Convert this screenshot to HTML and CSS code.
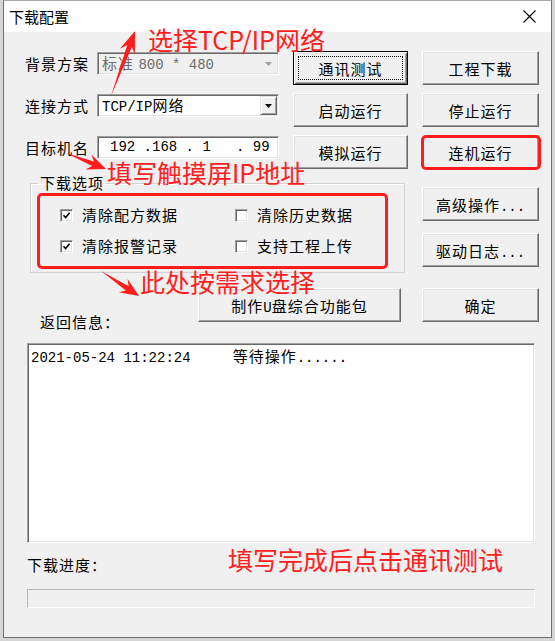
FILE: index.html
```html
<!DOCTYPE html>
<html lang="zh-CN">

<head>
    <meta charset="UTF-8">
    <title>下载配置</title>
    <link rel="stylesheet" href="styles.css">
</head>

<body>
    <div class="window">
        <div class="titlebar">
            <span class="title">下载配置</span>
            <span class="close">
                <svg width="13" height="13" viewBox="0 0 13 13">
                    <path d="M0.5 0.5 L12.5 12.5 M12.5 0.5 L0.5 12.5" stroke="#000" stroke-width="1.1" fill="none" />
                </svg>
            </span>
        </div>

        <div class="content">
            <div class="top-grid">
                <span class="field-label">背景方案</span>
                <div class="field combo disabled">
                    <span class="field-text">标准 <span class="mono">800 * 480</span></span>
                    <span class="drop">
                        <svg width="7" height="4" viewBox="0 0 7 4"><polygon points="0,0 7,0 3.5,4" fill="#a0a0a0" /></svg>
                    </span>
                </div>
                <button class="btn focused">通讯测试</button>
                <button class="btn">工程下载</button>

                <span class="field-label">连接方式</span>
                <div class="field combo">
                    <span class="field-text"><span class="mono">TCP/IP</span>网络</span>
                    <span class="drop raised">
                        <svg width="7" height="4" viewBox="0 0 7 4"><polygon points="0,0 7,0 3.5,4" fill="#000" /></svg>
                    </span>
                </div>
                <button class="btn">启动运行</button>
                <button class="btn">停止运行</button>

                <span class="field-label">目标机名</span>
                <div class="field ip">
                    <span class="mono ip-text">192 .168 . 1   . 99</span>
                </div>
                <button class="btn">模拟运行</button>
                <button class="btn flagged">连机运行</button>

                <fieldset class="options">
                    <legend>下载选项</legend>
                    <div class="marked-group">
                        <label class="check"><span class="box"><svg width="9" height="9" viewBox="0 0 9 9"><path d="M1.5 4.2 L3.6 6.5 L7.6 1.8" stroke="#000" stroke-width="1.6" fill="none" /></svg></span>清除配方数据</label>
                        <label class="check"><span class="box"></span>清除历史数据</label>
                        <label class="check"><span class="box"><svg width="9" height="9" viewBox="0 0 9 9"><path d="M1.5 4.2 L3.6 6.5 L7.6 1.8" stroke="#000" stroke-width="1.6" fill="none" /></svg></span>清除报警记录</label>
                        <label class="check"><span class="box"></span>支持工程上传</label>
                    </div>
                </fieldset>

                <div class="side">
                    <button class="btn">高级操作<span class="mono">...</span></button>
                    <button class="btn">驱动日志<span class="mono">...</span></button>
                </div>
            </div>

            <div class="action-row">
                <span class="return-label">返回信息：</span>
                <button class="btn wide">制作<span class="mono">U</span>盘综合功能包</button>
                <button class="btn">确定</button>
            </div>

            <div class="log">
                <div class="log-line mono">2021-05-24 11:22:24     <span class="cjk">等待操作</span>......</div>
            </div>

            <div class="progress-label">下载进度：</div>
            <div class="progress"></div>
        </div>
    </div>

    <!-- annotations drawn over the screenshot -->
    <div class="note note-net">选择TCP/IP网络</div>
    <div class="note note-ip">填写触摸屏IP地址</div>
    <div class="note note-opt">此处按需求选择</div>
    <div class="note note-test">填写完成后点击通讯测试</div>

    <svg class="arrows" width="555" height="641" viewBox="0 0 555 641">
        <polygon points="111,96 127.2,45.1 119.9,48.8 135,31 134.9,54.4 131.8,46.9" fill="#ff1c1c" />
        <polygon points="66,153 93.9,161.5 91.4,154.6 106,169 85.4,169.4 92.1,166.1" fill="#ff1c1c" />
        <polygon points="101,271 128.7,286.2 127.5,278.9 139,296 118.7,292.3 125.9,290.4" fill="#ff1c1c" />
    </svg>
</body>

</html>
```

FILE: styles.css
```css
* {
    box-sizing: border-box;
}

body {
    margin: 0;
    width: 555px;
    height: 641px;
    overflow: hidden;
    position: relative;
    background-color: #d6d6d6;
    font-family: "Noto Sans CJK SC", sans-serif;
    color: #000;
}

.window {
    margin-left: 3px;
    width: 549px;
    height: 638px;
    background-color: #f0f0f0;
    border: 1px solid #6f6f6f;
    border-top-color: #a8a8a8;
}

.titlebar {
    height: 31px;
    background-color: #fff;
    display: flex;
    align-items: center;
    justify-content: space-between;
}

.title {
    padding-left: 5px;
    font-size: 15px;
}

.close {
    width: 44px;
    height: 31px;
    display: flex;
    align-items: center;
    justify-content: center;
}

.close svg {
    display: block;
}

.content {
    padding: 19px 0 0 21px;
    font-size: 15px;
    letter-spacing: 1px;
}

.mono {
    font-family: "Liberation Mono", monospace;
    font-size: 14px;
    letter-spacing: 0;
}

.cjk {
    font-family: "Noto Sans CJK SC", sans-serif;
    font-size: 15px;
    letter-spacing: 1px;
}

/* top part: labels, fields and command buttons */
.top-grid {
    display: grid;
    grid-template-columns: 72px 196px 129px 117px;
    grid-template-rows: 34px 34px 34px auto;
    row-gap: 8px;
}

.field-label {
    line-height: 23px;
    margin-top: 1px;
}

.field {
    width: 182px;
    height: 23px;
    margin-top: 1px;
    background-color: #fff;
    border: 1px solid;
    border-color: #a0a0a0 #fff #fff #a0a0a0;
    box-shadow: inset 1px 1px #696969, inset -1px -1px #e3e3e3;
    display: flex;
    align-items: center;
}

.combo .field-text {
    flex: 1;
    padding-left: 4px;
    line-height: 19px;
}

.combo.disabled {
    background-color: #f0f0f0;
    color: #6d6d6d;
}

.drop {
    width: 17px;
    height: 19px;
    margin-right: 1px;
    display: flex;
    align-items: center;
    justify-content: center;
    background-color: #f0f0f0;
}

.drop svg {
    display: block;
}

.drop.raised {
    border: 1px solid;
    border-color: #e3e3e3 #696969 #696969 #e3e3e3;
    box-shadow: inset 1px 1px #fff, inset -1px -1px #a0a0a0;
}

.ip-text {
    padding-left: 12px;
    white-space: pre;
    line-height: 19px;
}

.btn {
    position: relative;
    width: 115px;
    height: 34px;
    padding: 0;
    background-color: #f0f0f0;
    border: 1px solid;
    border-color: #fff #696969 #696969 #fff;
    box-shadow: inset -1px -1px #a0a0a0, inset 1px 1px #e3e3e3;
    font-family: "Noto Sans CJK SC", sans-serif;
    font-size: 15px;
    letter-spacing: 1px;
    color: #000;
}

.top-grid > .btn:nth-child(4n),
.side .btn,
.action-row .btn:last-child {
    width: 117px;
}

.btn.focused {
    border-color: #000;
    box-shadow: inset 1px 1px #fff, inset -1px -1px #696969, inset 2px 2px #e3e3e3, inset -2px -2px #a0a0a0;
}

.btn.focused::after {
    content: "";
    position: absolute;
    top: 4px;
    left: 4px;
    right: 4px;
    bottom: 4px;
    border: 1px dotted #000;
}

.btn.flagged::after {
    content: "";
    position: absolute;
    top: -1px;
    left: -2px;
    right: -3px;
    bottom: -2px;
    border: 3px solid #ff1c1c;
    border-radius: 5px;
}

/* download options group */
.options {
    grid-column: 1 / 4;
    margin: -1px 17px 0 5px;
    padding: 3px 16px 3px 6px;
    border: 1px solid #d2d2d2;
    box-shadow: inset 1px 1px #fff;
    min-width: 0;
}

.options legend {
    padding: 0 2px;
    margin-left: 1px;
    line-height: 14px;
}

.marked-group {
    border: 3px solid #ff1c1c;
    border-radius: 5px;
    padding: 11px 0 12px 20px;
    display: grid;
    grid-template-columns: 175px auto;
    row-gap: 15px;
}

.check {
    display: flex;
    align-items: center;
    gap: 9px;
    line-height: 16px;
}

.box {
    width: 13px;
    height: 13px;
    background-color: #fff;
    border: 1px solid;
    border-color: #a0a0a0 #fff #fff #a0a0a0;
    box-shadow: inset 1px 1px #696969, inset -1px -1px #e3e3e3;
    display: flex;
    align-items: center;
    justify-content: center;
}

.box svg {
    display: block;
}

.side {
    display: flex;
    flex-direction: column;
    gap: 12px;
    padding-top: 10px;
}

/* lower part */
.action-row {
    margin-top: 15px;
    display: grid;
    grid-template-columns: 173px 224px 117px;
    height: 34px;
}

.return-label {
    align-self: end;
    padding-left: 15px;
    line-height: 16px;
    margin-bottom: -8px;
}

.btn.wide {
    width: 203px;
}

.log {
    margin: 21px 0 0 2px;
    width: 508px;
    height: 200px;
    background-color: #fff;
    border: 1px solid;
    border-color: #a0a0a0 #fff #fff #a0a0a0;
    box-shadow: inset 1px 1px #696969, inset -1px -1px #e3e3e3;
    padding: 3px 0 0 3px;
}

.log-line {
    white-space: pre;
    line-height: 18px;
}

.progress-label {
    margin: 14px 0 0 2px;
    line-height: 16px;
}

.progress {
    margin: 16px 0 0 2px;
    width: 508px;
    height: 19px;
    border: 1px solid;
    border-color: #b9b9b9 #fff #fff #b9b9b9;
    background-color: #f0f0f0;
}

/* red annotations */
.note {
    position: absolute;
    color: #fe2020;
    font-size: 25px;
    line-height: 30px;
    white-space: nowrap;
}

.note-net {
    left: 148px;
    top: 24px;
}

.note-ip {
    left: 107px;
    top: 157px;
}

.note-opt {
    left: 140px;
    top: 266px;
}

.note-test {
    left: 228px;
    top: 544px;
}

.arrows {
    position: absolute;
    left: 0;
    top: 0;
    pointer-events: none;
}
```
